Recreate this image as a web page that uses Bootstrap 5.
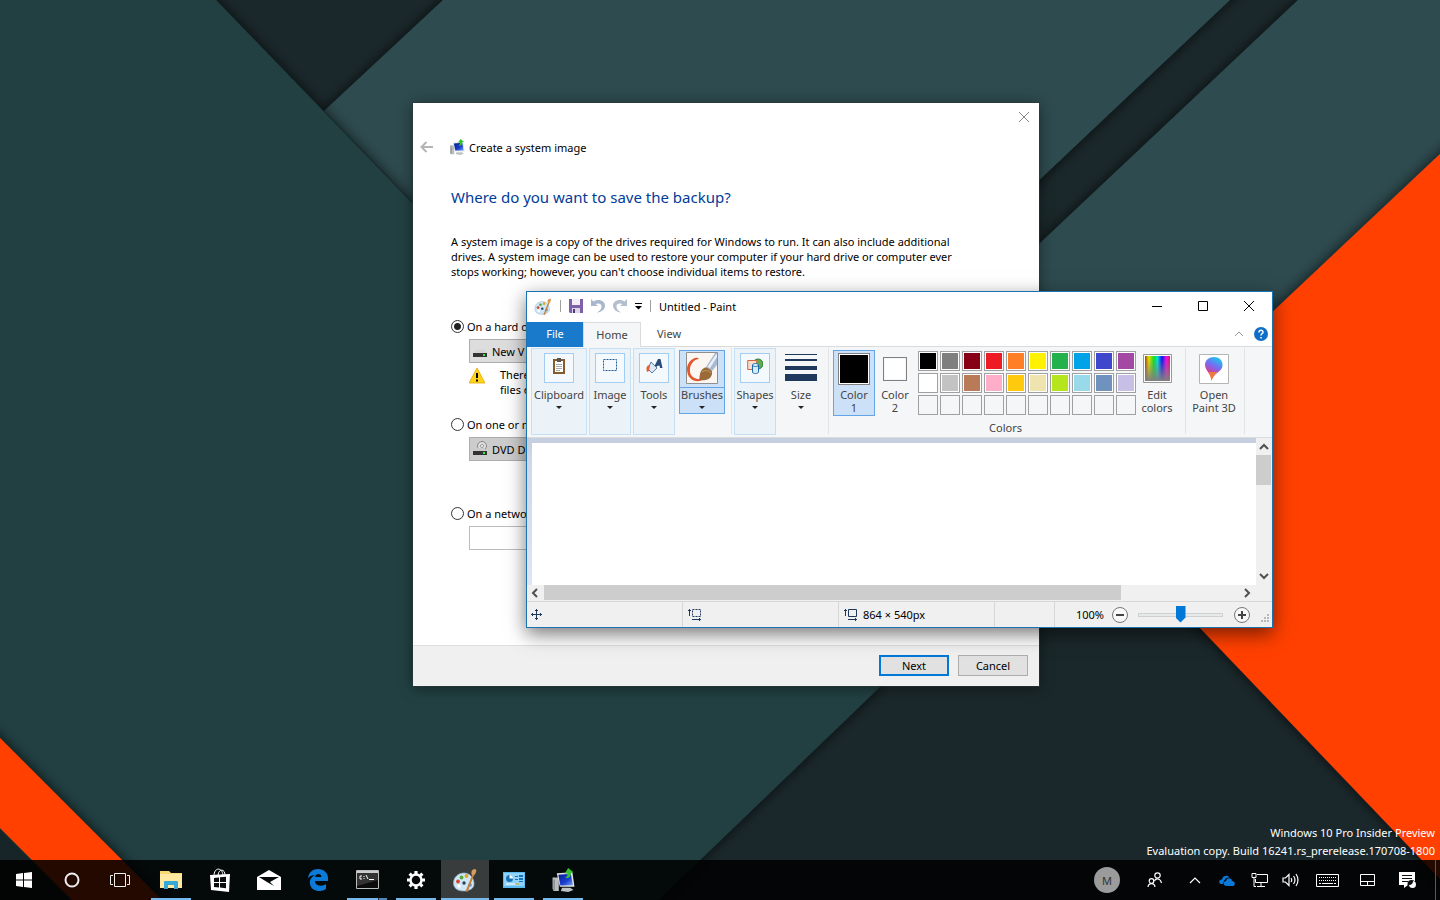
<!DOCTYPE html>
<html lang="en">
<head>
<meta charset="utf-8">
<meta name="viewport" content="width=device-width, initial-scale=1">
<title>Desktop</title>
<link href="https://cdn.jsdelivr.net/npm/bootstrap@5.3.0/dist/css/bootstrap.min.css" rel="stylesheet">
<style>
body{font-family:"Noto Sans","Open Sans",sans-serif;font-size:11px;line-height:15px;color:#000;background:#223f42}
button,input,select{font:inherit;color:inherit}
svg{display:block;flex:none}
.bare{border:0;background:none;padding:0;display:flex;align-items:center;justify-content:center}
.screen{isolation:isolate}
.wallpaper{z-index:-1}
/* wizard */
.wizard{left:413px;top:103px;width:626px;background:#fff;box-shadow:0 0 0 1px #2a3a3c99,0 2px 14px #0007}
.wizard-close{width:30px;height:28px}
.wizard-title{height:32px;padding-left:7px}
.wizard-body{padding:22px 38px 0;min-height:482px}
.wizard-body h1{font-size:15px;line-height:24px;color:#003c99;margin:0 0 25px}
.intro{margin:0 0 40px;width:530px}
.choice{gap:3px;height:15px;margin-bottom:5px}
.choice input{appearance:none;width:13px;height:13px;margin:0;border:1px solid #333;border-radius:50%;background:#fff}
.choice input:checked{background:radial-gradient(circle,#222 3px,#fff 4px)}
.drive{margin-left:18px;height:24px;width:430px}
.drive select{appearance:none;width:100%;height:24px;padding:0 0 0 22px;border:1px solid #adadad;border-radius:0;background:#ddd}
.drive select.dim{background:#ccc}
.drive svg{left:4px;top:4px;pointer-events:none}
.drive.disc{margin-bottom:45px}
.warn{margin:4px 0 20px 18px;gap:15px;height:30px}
.share{margin-left:18px;width:330px;height:24px;border:1px solid #bcbcbc;padding:0 4px}
.wizard-foot{background:#f0f0f0;border-top:1px solid #dfdfdf;height:41px;padding:0 11px 2px;gap:9px}
.push{width:70px;height:21px;border:1px solid #adadad;background:#e1e1e1;padding:0}
.push.main{border:2px solid #0078d7}
/* paint */
.paint{left:526px;top:291px;width:747px;background:#fff;border:1px solid #1a74b0;box-shadow:0 6px 18px #0008}
.paint-title{height:30px;padding:0 0 2px 7px}
.vline{width:1px;height:12px;background:#a0a0a0}
.caption{width:46px;height:28px}
.tabs{height:25px;border-bottom:1px solid #dadbdc;color:#444}
.tabs button{width:56px;height:25px;color:#444;padding-bottom:1px}
.tabs .file{background:#1979ca;color:#fff}
.tabs .on{background:#f5f6f7;border:1px solid #dadbdc;border-bottom:0;width:58px}
.tabs .tool{width:14px;margin:0 4px}
.ribbon{background:#f5f6f7;height:90px;padding:1px 4px 0;color:#444}
.ribbon button{line-height:13px}
.grp{height:87px;width:42px;border:1px solid #c5dff4;background:#ecf3f8;flex-direction:column;justify-content:flex-start;padding-top:4px}
.grp.wide{width:56px}
.grp.plain{border-color:transparent;background:none}
.tile{width:30px;height:30px;border:1px solid #a2cdf0;background:#f4f9fe;margin-bottom:5px;display:flex;justify-content:center;padding-top:4px}
.grp::after,.brush::after{content:"";border:3px solid transparent;border-top:3px solid #222;margin-top:5px}
.brush{width:46px;height:64px;border:1px solid #64a5e7;background:#cce0f7;flex-direction:column;justify-content:flex-start;margin:2px 0 0 4px;padding-top:1px}
.brush .pic{height:36px;width:100%;border-bottom:1px solid #64a5e7;display:flex;justify-content:center}
.rule{width:1px;height:86px;background:#e2e3e4}
.pick{flex-direction:column;justify-content:flex-start;width:40px;height:66px;margin-top:2px;border:1px solid transparent;padding-top:2px}
.pick.on{width:42px;background:#cce0f7;border-color:#64a5e7}
.pick.launch{padding-top:3px}
.pick.launch svg{margin-bottom:4px}
.ink{height:32px;width:32px;border:1px solid #808080;padding:1px;background:#fff;margin-bottom:3px;background-clip:content-box}
.ink.dark{background-color:#000;box-shadow:inset 0 0 0 1px #fff}
.ink.small-ink{width:24px;height:24px;margin:4px 0 7px}
.palette{display:grid;grid-template-columns:repeat(10,20px);gap:2px;margin:3px 0 0 3px;align-content:start}
.palette button{height:20px;border:1px solid #a0a0a0;background:#f5f6f7;padding:1px;background-clip:content-box}
.work{border-top:1px solid #dadbdc;background:linear-gradient(#c5cfe0 5px,#ccd8e8 20px,#dce6f4)}
.work-top{background:#c5cfe0;height:5px}
.sheet{height:142px;background:#fff;margin:5px 0 0 5px}
.vbar{width:16px;background:#f0f0f0}
.vbar .thumb{height:30px;width:15px;background:#cdcdcd}
.hbar{height:16px;background:#f0f0f0}
.hbar .thumb{width:577px;height:15px;background:#cdcdcd}
.status{height:26px;background:#f0f0f0;border-top:1px solid #d7d7d7}
.cell{height:25px;width:156px;border-right:1px solid #d7d7d7;padding-left:4px;gap:4px}
.cell.narrow{width:60px}
.zoom-box{margin-right:2px}
.zoom-range{appearance:none;width:85px;height:18px;background:none;margin:0 11px 0 10px}
.zoom-range::-webkit-slider-runnable-track{height:4px;background:#e7eaea;border:1px solid #d0d0d0}
.zoom-range::-webkit-slider-thumb{appearance:none;width:10px;height:17px;margin-top:-8px;background:#0078d7;clip-path:polygon(0 0,100% 0,100% 70%,50% 100%,0 70%)}
/* desktop */
.watermark{color:#fff;line-height:18px;padding:0 5px 0 0}
.taskbar{height:40px;background:rgba(0,0,0,.86)}
.task{width:48px;height:40px;position:relative}
.task.run::after{content:"";position:absolute;bottom:0;left:4px;right:4px;height:2px;background:#76b9ed}
.task.many::after{background:linear-gradient(90deg,#76b9ed 31px,#1b2b38 31px,#1b2b38 32px,#5086b5 32px)}
.task.live{background:#383c3d}
.task.live::after{left:0;right:0}
.apps{gap:1px;margin-left:3px}
.tray{width:32px;height:40px}
.tray.w40{width:40px}
.avatar{width:26px;height:26px;border-radius:50%;background:#9b9b9b;color:#333}
.edge-line{width:1px;height:40px;background:#5a5a5a;margin:0 4px 0 8px}
</style>
</head>
<body>
<svg width="0" height="0" class="position-absolute" aria-hidden="true">
 <defs>
  <linearGradient id="scr" x1="0" x2="1" y1="0" y2="1"><stop offset="0" stop-color="#0a1c8c"/><stop offset=".6" stop-color="#1b3fd0"/><stop offset="1" stop-color="#7aa6f5"/></linearGradient>
  <linearGradient id="hue"><stop offset="0" stop-color="#a33a10"/><stop offset=".15" stop-color="#e8e000"/><stop offset=".35" stop-color="#10e020"/><stop offset=".5" stop-color="#00e0e0"/><stop offset=".68" stop-color="#1010f0"/><stop offset=".85" stop-color="#f010e0"/><stop offset="1" stop-color="#e01060"/></linearGradient>
  <linearGradient id="grey" x2="0" y2="1"><stop offset=".1" stop-color="#808080" stop-opacity="0"/><stop offset="1" stop-color="#808080"/></linearGradient>
  <linearGradient id="drop" x1=".7" x2=".3" y2="1"><stop offset="0" stop-color="#18c8f0"/><stop offset=".4" stop-color="#7a6af0"/><stop offset=".7" stop-color="#d0409a"/><stop offset="1" stop-color="#ffb020"/></linearGradient>
  <symbol id="pal" viewBox="0 0 24 24">
   <path d="M11 5C5 5 .5 9.500.5 15c0 5 4 8 10 8 5 0 10.500-2 10.500-7 0-6-4-11-10-11z" fill="#cfe6f5" stroke="#8fb4cc" stroke-width=".7"/>
   <circle cx="5" cy="13.500" r="1.900" fill="#d8452c"/><circle cx="8.500" cy="9.500" r="1.900" fill="#59a83d"/><circle cx="13.500" cy="8" r="1.900" fill="#e8a51f"/><circle cx="11" cy="15" r="1.700" fill="#24435a"/><circle cx="6" cy="18" r="1.700" fill="#fff"/><circle cx="17" cy="17" r="1.800" fill="#5792d0"/>
   <path d="M12.500 23.500 19.500 6l1.700.8-6.500 17z" fill="#c87f35"/><path d="M18.500 6.500C18 3 19 2 21 1l2 .5c1 2-.5 4-2 6z" fill="#d99a5a"/>
  </symbol>
  <symbol id="pc" viewBox="1 0 22 23">
   <path d="M2 9h6v13H3l-1-2z" fill="#b9bdc0"/><path d="M3.500 11v10" stroke="#777" stroke-width="1"/><path d="m6 5 15-1 2 14H9z" fill="#e4e6e6"/><path d="m7.500 6.500 12-1 2 11-12 .2z" fill="url(#scr)"/><path d="M11 19h8l3 2-5 2-7-1z" fill="#bfc3c5"/>
   <path d="M14 9.500c2-1 2.500-2.500 2-4.500l-2.500.5L17 0l5 4-2.500.5C20 8 18 10 14 9.500z" fill="#36c22e"/>
  </symbol>
 </defs>
</svg>
<div class="screen position-relative d-flex flex-column vh-100 overflow-hidden">
 <svg class="wallpaper position-absolute top-0 start-0 w-100 h-100" viewBox="0 0 1440 900" preserveAspectRatio="xMidYMid slice" aria-hidden="true">
  <defs><filter id="sh" x="-10%" y="-10%" width="120%" height="120%"><feDropShadow dx="0" dy="0" stdDeviation="7" flood-color="#000" flood-opacity=".75"/></filter></defs>
  <rect width="1440" height="900" fill="#1b282b"/>
  <path d="M1298 0 1039 244 900 375 1130 500 1500 200V-40H1340z" fill="#2d4b4f" filter="url(#sh)"/>
  <path d="M443 0 324 111 700 500 1230 0 1273-40H486z" fill="#2d4b4f" filter="url(#sh)"/>
  <path d="M216 0 177-40H-40V940H617L880 687z" fill="#223f42" filter="url(#sh)"/>
  <path d="M1440 154 1110 465 1117 542 1200 628 1460 900H1500V98z" fill="#ff4000" filter="url(#sh)"/>
  <path d="M-30 708 0 738 162 900H72L0 828-30 798z" fill="#ff4000" filter="url(#sh)"/>
  <path d="M0 830 70 900H0z" fill="#172528"/>
 </svg>

 <main class="flex-grow-1 d-flex flex-column justify-content-end">
  <section class="wizard position-absolute" aria-label="Create a system image">
   <div class="d-flex justify-content-end"><button class="bare wizard-close" aria-label="Close"><svg width="12" height="12" stroke="#888" fill="none"><path d="m1 1 10 10M11 1 1 11"/></svg></button></div>
   <div class="wizard-title d-flex align-items-center">
    <button class="bare me-3" aria-label="Back"><svg width="13" height="12" fill="none" stroke="#b5b5b5" stroke-width="2"><path d="M13 6H2M6.500 1 1.500 6l5 5"/></svg></button>
    <svg width="16" height="16"><use href="#pc"/></svg><span class="ms-1">Create a system image</span>
   </div>
   <div class="wizard-body">
    <h1 class="fw-normal">Where do you want to save the backup?</h1>
    <p class="intro">A system image is a copy of the drives required for Windows to run. It can also include additional<br>drives. A system image can be used to restore your computer if your hard drive or computer ever<br>stops working; however, you can't choose individual items to restore.</p>
    <div class="choice d-flex align-items-center"><input type="radio" name="target" id="t1" checked><label for="t1">On a hard d</label></div>
    <div class="drive position-relative"><select aria-label="Hard disk"><option>New V</option></select>
     <svg class="position-absolute" width="14" height="16"><path d="m3 7 8-1 3 4H0z" fill="#d5d5d5"/><path d="M0 10h14v4H0z" fill="#333"/><path d="M10 11h2v2h-2z" fill="#3e4"/></svg></div>
    <div class="warn d-flex"><svg width="16" height="17"><path d="M8 1 16 16H0z" fill="#ffd21c" stroke="#e8a800" stroke-width=".8"/><path d="M8 6v5M8 12.500v2" stroke="#000" stroke-width="2"/></svg><div>There<br>files o</div></div>
    <div class="choice d-flex align-items-center"><input type="radio" name="target" id="t2"><label for="t2">On one or m</label></div>
    <div class="drive disc position-relative"><select class="dim" aria-label="DVD"><option>DVD D</option></select>
     <svg class="position-absolute" width="15" height="16"><circle cx="9" cy="5" r="4.500" fill="#ddd" stroke="#888"/><circle cx="9" cy="5" r="1.500" fill="#fff" stroke="#999"/><path d="m2 8 3-1h6l3 3H0z" fill="#ccc"/><path d="M0 10h14v4H0z" fill="#333"/><path d="M10 11h2v2h-2z" fill="#3e4"/></svg></div>
    <div class="choice d-flex align-items-center"><input type="radio" name="target" id="t3"><label for="t3">On a netwo</label></div>
    <input class="share" type="text" aria-label="Network location">
   </div>
   <div class="wizard-foot d-flex justify-content-end align-items-center"><button class="push main">Next</button><button class="push">Cancel</button></div>
  </section>

  <section class="paint position-absolute" aria-label="Paint">
   <div class="paint-title d-flex align-items-center">
    <svg width="18" height="17"><use href="#pal"/></svg>
    <div class="vline mx-2"></div>
    <button class="bare me-2" aria-label="Save"><svg width="14" height="14"><path d="M0 0h14v14H1l-1-1z" fill="#7e5fa8"/><path d="M3 0h8v6H3z" fill="#f1eef6"/><path d="M3 9h8v5H3z" fill="#dcd6e6"/><path d="M4 10h2v4H4z" fill="#4e3a78"/></svg></button>
    <button class="bare me-2" aria-label="Undo"><svg width="14" height="16"><path d="M0 1v7h7L4.500 6C8 4.500 11 6 10.500 9c-.3 2.500-2 4-4.500 5.500 5-.5 8-3.500 8-7C14 3 8 0 2.500 3.500z" fill="#a9b7cc"/></svg></button>
    <button class="bare me-2" aria-label="Redo"><svg width="14" height="16"><path d="M14 1v7H7l2.500-2C6 4.500 3 6 3.500 9c.3 2.500 2 4 4.500 5.500-5-.5-8-3.500-8-7C0 3 6 0 11.500 3.500z" fill="#b4bfcd"/></svg></button>
    <button class="bare me-2" aria-label="Customize"><svg width="7" height="8"><path d="M0 1h7v1H0zM0 4h7L3.500 7.500z"/></svg></button>
    <div class="vline"></div><span class="ms-2">Untitled - Paint</span>
    <div class="ms-auto d-flex">
     <button class="bare caption" aria-label="Minimize"><svg width="10" height="10"><path d="M0 5h10v1H0z"/></svg></button>
     <button class="bare caption" aria-label="Maximize"><svg width="10" height="10" fill="none" stroke="#000"><path d="M.5.5h9v9h-9z"/></svg></button>
     <button class="bare caption" aria-label="Close"><svg width="10" height="10" stroke="#000"><path d="m0 0 10 10M10 0 0 10"/></svg></button>
    </div>
   </div>
   <div class="tabs d-flex align-items-center">
    <button class="bare file">File</button><button class="bare on">Home</button><button class="bare">View</button>
    <button class="bare tool ms-auto" aria-label="Collapse"><svg width="10" height="6" fill="none" stroke="#999"><path d="m1 5 4-4 4 4"/></svg></button>
    <button class="bare tool" aria-label="Help"><svg width="14" height="14"><circle cx="7" cy="7" r="7" fill="#0f6fc6"/><path d="M5 5.500C5 2.500 9.200 2.700 9 5.200 8.900 6.500 7 6.600 7 8.500M7 10v1.500" stroke="#fff" stroke-width="1.500" fill="none"/></svg></button>
   </div>
   <div class="ribbon d-flex">
    <button class="bare grp wide"><span class="tile"><svg width="12" height="16"><path d="M1 2h10v13H1z" fill="#fff" stroke="#8a5a28" stroke-width="2"/><path d="M4 0h4v4H4z" fill="#555"/><path d="M3 6.500h6M3 8.500h6M3 10.500h6M3 12.500h4" stroke="#aaa"/></svg></span>Clipboard</button>
    <button class="bare grp" style="margin-left:2px"><span class="tile"><svg width="14" height="14" fill="none" stroke="#1f5a96" stroke-dasharray="2 1"><path d="M.5 1.500h13v11H.5z"/></svg></span>Image</button>
    <button class="bare grp" style="margin-left:2px"><span class="tile"><svg width="17" height="16"><path d="m8 9 4-8h2.500l2 9H14l-.5-2.500-2.500.5-1 2z" fill="#2a4a78"/><path d="m5 4 6 6-5 5-4-4z" fill="#dce9f5" stroke="#5a7a9a"/><path d="M4 7C0 7 0 11 1 14l2-1z" fill="#e06030"/></svg></span>Tools</button>
    <button class="bare brush"><span class="pic"><svg width="32" height="32"><path d="M.5.5h31v31H.5z" fill="#fbf6f2" stroke="#8f8f8f"/><path d="M13 7C10 3 1 9 1 17c0 9 6 13 13 12l4-2c-7 1-13-1-14-7C3 13 8 7 13 7z" fill="#e2562a"/><path d="M13 28c1-3 0-9 5-12 4-2 9 1 8 6-1 6-8 7-13 6z" fill="#9a6a38"/><path d="M16 20c3-2 6-2 9 1" stroke="#c79a62" fill="none"/><path d="m20 15 9-14h2v12l-5 6z" fill="#a9bad0"/><path d="m21.500 15 8-12 1.500-1v3l-7 11z" fill="#eaf0f8"/></svg></span>Brushes</button>
    <div class="rule" style="margin:0 2px 0 6px"></div>
    <button class="bare grp"><span class="tile"><svg width="16" height="17"><circle cx="11" cy="6" r="5" fill="#5fae4e" stroke="#2d7d32"/><path d="M.7 2.500h9v9h-9z" fill="#f6ddd0" stroke="#d8653a"/><path d="M5.500 7c0-2 6-2 6 0v7c0 2-6 2-6 0z" fill="#d7ecfb" stroke="#1d6aa8"/><path d="M5.500 7c0 2 6 2 6 0" stroke="#1d6aa8" fill="none"/></svg></span>Shapes</button>
    <button class="bare grp plain ms-1"><svg width="32" height="35" fill="#1e395b"><path d="M0 1h32v1H0zM0 6h32v2H0zM0 13h32v4H0zM0 21h32v7H0z"/></svg>Size</button>
    <div class="rule" style="margin:0 4px 0 6px"></div>
    <div class="d-flex flex-column align-items-center">
     <div class="d-flex">
      <button class="bare pick on"><span class="ink dark"></span>Color<br>1</button>
      <button class="bare pick"><span class="ink small-ink"></span>Color<br>2</button>
      <div class="palette" id="palette"></div>
      <button class="bare pick launch" style="width:42px"><svg width="29" height="30"><path d="M.5.5h28v28H.5z" fill="#fff" stroke="#999"/><path d="M2 2h25v25H2z" fill="url(#hue)"/><path d="M2 2h25v25H2z" fill="url(#grey)"/></svg><span>Edit<br>colors</span></button>
     </div>
     <span class="mt-1">Colors</span>
    </div>
    <div class="rule" style="margin:0 4px 0 7px"></div>
    <button class="bare pick launch" style="width:48px"><svg width="30" height="30"><path d="M.5.5h29v29H.5z" fill="#fff" stroke="#b5b5b5"/><path d="M15 3c6 0 9 4 8.500 9C23 18 14 19 12.500 27 13 20 6 17 6 11c0-5 4-8 9-8z" fill="url(#drop)"/><path d="M9 18c2 2 3 6 3.500 9 1-4 3-6 6-9z" fill="#ef7a40"/></svg><span class="text-nowrap">Open<br>Paint 3D</span></button>
    <div class="rule" style="margin-left:6px"></div>
   </div>
   <div class="work d-flex">
    <div class="sheet flex-grow-1"></div>
    <div class="vbar d-flex flex-column align-items-start">
     <svg width="15" height="17" fill="none" stroke="#505050" stroke-width="2"><path d="m4 11 4-4 4 4"/></svg><div class="thumb"></div>
     <svg class="mt-auto" width="15" height="17" fill="none" stroke="#505050" stroke-width="2"><path d="m4 6 4 4 4-4"/></svg>
    </div>
   </div>
   <div class="hbar d-flex">
    <svg width="17" height="15" fill="none" stroke="#505050" stroke-width="2"><path d="m10 4-4 4 4 4"/></svg><div class="thumb"></div>
    <svg class="ms-auto me-3" width="17" height="15" fill="none" stroke="#505050" stroke-width="2"><path d="m6 4 4 4-4 4"/></svg>
   </div>
   <div class="status d-flex align-items-center">
    <div class="cell d-flex align-items-center"><svg width="11" height="11" stroke="#1e395b" fill="none"><path d="M5.500 0v11M0 5.500h11M4 1.500h3M4 9.500h3M1.500 4v3M9.500 4v3"/></svg></div>
    <div class="cell d-flex align-items-center"><svg width="15" height="12" stroke="#1e395b" fill="none"><path d="M2.500 0v7M1 1.500h3M5 10.500h9M12.500 9v3"/><path d="M5.500.5h8v7h-8z" stroke-dasharray="2 1"/></svg></div>
    <div class="cell d-flex align-items-center"><svg width="16" height="12" stroke="#1e395b" fill="none"><path d="M2.500 0v7M1 1.500h3M5 10.500h9M12.500 9v3M5.500.5h8v7h-8z"/></svg>864 × 540px</div>
    <div class="cell narrow"></div>
    <div class="zoom-box ms-auto d-flex align-items-center">
     <span class="me-2">100%</span>
     <button class="bare" aria-label="Zoom out"><svg width="16" height="16" fill="#f8f8f8" stroke="#777"><circle cx="8" cy="8" r="7.500"/><path d="M4 8h8" stroke="#444" stroke-width="2"/></svg></button>
     <input class="zoom-range" type="range" min="0" max="100" value="50" aria-label="Zoom">
     <button class="bare" aria-label="Zoom in"><svg width="16" height="16" fill="#f8f8f8" stroke="#777"><circle cx="8" cy="8" r="7.500"/><path d="M4 8h8M8 4v8" stroke="#444" stroke-width="2"/></svg></button>
     <svg class="align-self-end ms-2" width="12" height="12" fill="#b8b8b8"><path d="M9 2h2v2H9zM9 5h2v2H9zM6 5h2v2H6zM9 8h2v2H9zM6 8h2v2H6zM3 8h2v2H3z"/></svg>
    </div>
   </div>
  </section>
  <div class="watermark text-end">Windows 10 Pro Insider Preview<br>Evaluation copy. Build 16241.rs_prerelease.170708-1800</div>
 </main>

 <nav class="taskbar d-flex align-items-center" aria-label="Taskbar">
  <button class="bare task" aria-label="Start"><svg width="16" height="16" fill="#fff"><path d="m0 2 7-1v6.500H0zM8 .9 16 0v7.500H8zM0 8.500h7V15l-7-1zM8 8.500h8V16l-8-1z"/></svg></button>
  <button class="bare task" aria-label="Cortana"><svg width="16" height="16" fill="none" stroke="#eee" stroke-width="2"><circle cx="8" cy="8" r="6.500"/></svg></button>
  <button class="bare task" aria-label="Task view"><svg width="20" height="16" fill="none" stroke="#eee"><path d="M4.500 1.500h11v13h-11zM3 3.500H.5v9H3M17 3.500h2.500v9H17"/></svg></button>
  <div class="apps d-flex">
   <button class="bare task run" aria-label="File Explorer"><svg width="22" height="18"><path d="M0 0h9l2 2h11v15H0z" fill="#f8d775"/><path d="M0 3h22v14H0z" fill="#ffe8a0"/><path d="M4 11c0-1 1-1 1-1h12s1 0 1 1v7h-4v-4H8v4H4z" fill="#35a8d8"/></svg></button>
   <button class="bare task" aria-label="Store"><svg width="22" height="24" fill="#fff"><path d="m1 7 20-1-1 18-18-2z"/><path d="M5 8c0-9 8-9 9-1M9 7c1-7 7-6 7 0" stroke="#fff" fill="none"/><path d="m5 10 5-.6V14H5zM11 9.300l6-.6V14h-6zM5 15h5v4.500L5 19zM11 15h6v5.300l-6-.7z" fill="#0a0c0d"/></svg></button>
   <button class="bare task" aria-label="Mail"><svg width="24" height="20"><path d="M0 7 12 0l12 7v13H0z" fill="#fff"/><path d="m2 7 20 0-9 5 4 4-7-4z" fill="#050708"/></svg></button>
   <button class="bare task" aria-label="Edge"><svg width="20" height="22" viewBox="0 0 20 22"><path d="M0 9C1 3 5 0 10 0c6 0 10 4 10 9v3H7c0 5 7 6 11 3v5c-6 4-15 2-16-5C1 11 4 7 8 6 4 6 2 7 0 9zm7-1h6.500C13.500 4 7.500 4 7 8z" fill="#0c7ad8"/></svg></button>
   <button class="bare task run many" aria-label="Command Prompt"><svg width="23" height="20"><path d="M.5.5h22v18H.5z" fill="#0c0c0c" stroke="#bbb"/><path d="M1 1h21v2H1z" fill="#ccc"/><path d="M1 3h21v7L1 16z" fill="#333"/><path d="M6 6H4v3h2M8 6v1M8 8v1M10 5l2 4M13 9.500h5" stroke="#fff" fill="none"/></svg></button>
   <button class="bare task run" aria-label="Settings"><svg width="18" height="18" viewBox="-9 -9 18 18"><circle r="5.500" fill="none" stroke="#fff" stroke-width="2.500"/><g stroke="#fff" stroke-width="3.200"><path d="M0-9v3M0 6v3M-9 0h3M6 0h3M-6.400-6.400l2 2M6.400 6.400l-2-2M-6.400 6.400l2-2M6.400-6.400l-2 2"/></g></svg></button>
   <button class="bare task run live" aria-label="Paint"><svg width="24" height="24"><use href="#pal"/></svg></button>
   <button class="bare task run" aria-label="Control Panel"><svg width="22" height="16"><path d="M0 0h22v16H0z" fill="#5db9ee"/><path d="M1 1h20v13H1z" fill="#8fd3f8"/><circle cx="6.500" cy="6.500" r="3.500" fill="#1970b8"/><path d="M6.500 6.500V3A3.500 3.500 0 0 1 10 6.500z" fill="#fff"/><path d="M12 4h3v1h-3zM16 3h4v2h-4zM12 7h3v1h-3zM16 6h4v2h-4zM16 9h4v1h-4z" fill="#1970b8"/><path d="M3 12h9" stroke="#fff"/><path d="M13 11.500h3v1h-3z" fill="#e8a020"/></svg></button>
   <button class="bare task run" aria-label="Backup"><svg width="24" height="24"><use href="#pc"/></svg></button>
  </div>
  <div class="ms-auto d-flex align-items-center">
   <button class="bare task" aria-label="Account"><span class="avatar d-flex align-items-center justify-content-center">M</span></button>
   <button class="bare task" aria-label="People"><svg width="16" height="16" fill="none" stroke="#fff" stroke-width="1.200"><circle cx="10.500" cy="3.500" r="2.700"/><path d="M7.500 9c1-3 6-3 7 2"/><circle cx="4.500" cy="9" r="2.300"/><path d="M1 15c.5-4.500 6.500-4.500 7 0"/></svg></button>
   <button class="bare tray" aria-label="Hidden icons"><svg width="12" height="8" fill="none" stroke="#fff" stroke-width="1.200"><path d="m1 7 5-5 5 5"/></svg></button>
   <button class="bare tray" aria-label="OneDrive"><svg width="16" height="11" fill="#0a78d6"><path d="M4 9H2C-1 8 0 4 3 4.500 4 0 9 0 10.500 2.500 7 2 5 5 4 9zM5 10c-1-3 1-4 2-4 1-4 6-3 6 0 3 0 4 4 1 5H7z"/></svg></button>
   <button class="bare tray" aria-label="Network"><svg width="17" height="14" fill="none" stroke="#fff"><path d="M6 1.500h10.500v8H4.500V6M10 9.500v4M6 13.500h8M1 .5h4v4H1zM3 4v9.500h2"/></svg></button>
   <button class="bare tray" aria-label="Volume"><svg width="18" height="14" fill="none" stroke="#fff" stroke-width="1.200"><path d="M1 5h2.500L7 1.500v11L3.500 9H1zM9 5q1.500 2 0 4M11.500 3q3 4 0 8M14 1q4 6 0 12"/></svg></button>
   <button class="bare tray w40" aria-label="Touch keyboard"><svg width="23" height="13" fill="none" stroke="#fff"><path d="M.5.5h22v12H.5z"/><path d="M3 3.500h17M3 6.500h17" stroke-dasharray="1 1"/><path d="M3 9.500h2M6 9.500h11M18 9.500h2"/></svg></button>
   <button class="bare tray w40" aria-label="Touchpad"><svg width="15" height="12" fill="none" stroke="#fff"><path d="M.5.5h14v11H.5zM.5 7.500h14M7.500 7.500v4"/></svg></button>
   <button class="bare tray w40" aria-label="Action center"><svg width="17" height="17"><path d="M0 0h16v13H9l-4 3v-3H0z" fill="#fff"/><path d="M3 3.500h10M3 6.500h10M3 9.500h6" stroke="#111"/><circle cx="12.500" cy="12" r="4" fill="#111"/><path d="M14 9a3.500 3.500 0 1 1-4 4c3 0 4-2 4-4z" fill="#fff"/></svg></button>
   <div class="edge-line"></div>
  </div>
 </nav>
</div>
<script src="https://cdn.jsdelivr.net/npm/bootstrap@5.3.0/dist/js/bootstrap.bundle.min.js"></script>
<script>
 // Two rows of stock colours, then a row of empty custom slots
 const colours = ['#000000','#7f7f7f','#880015','#ed1c24','#ff7f27','#fff200','#22b14c','#00a2e8','#3f48cc','#a349a4',
  '#ffffff','#c3c3c3','#b97a57','#ffaec9','#ffc90e','#efe4b0','#b5e61d','#99d9ea','#7092be','#c8bfe7'];
 const palette = document.getElementById('palette');
 for (let i = 0; i < 30; i++) {
  const b = document.createElement('button');
  b.setAttribute('aria-label', colours[i] || 'Empty');
  if (colours[i]) { b.style.backgroundColor = colours[i]; b.style.boxShadow = 'inset 0 0 0 1px #fff'; }
  palette.append(b);
 }
</script>
</body>
</html>
